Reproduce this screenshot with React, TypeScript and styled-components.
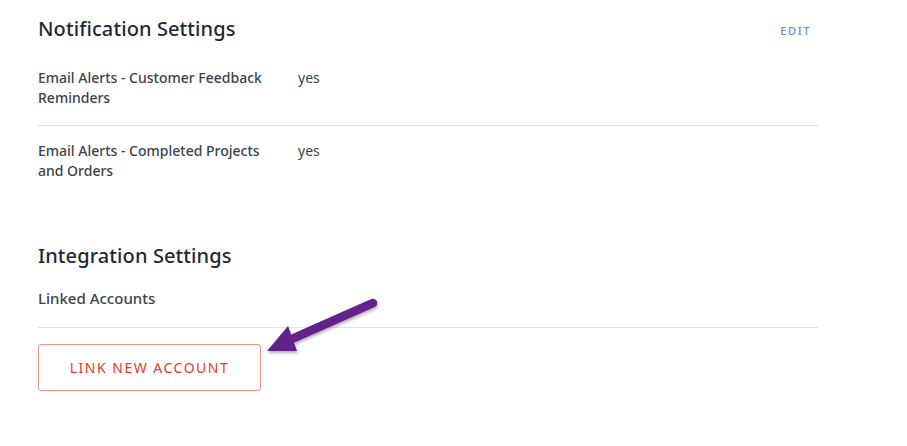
import * as React from "react";
import styled, { createGlobalStyle } from "styled-components";

const GlobalStyle = createGlobalStyle`
    body {
        margin: 0;
        background: #ffffff;
        font-family: "Noto Sans", "Liberation Sans", sans-serif;
    }
`;

const Page = styled.div`
    width: 780px;
    padding: 14px 0 0 38px;
`;

const Section = styled.section`
    display: flex;
    flex-direction: column;
`;

const SectionHeader = styled.div`
    display: flex;
    align-items: center;
    justify-content: space-between;
    height: 28px;
    padding-right: 7px;
`;

const Heading = styled.h2`
    margin: 0;
    font-size: 20px;
    font-weight: 500;
    color: #1f2935;
    letter-spacing: 0.1px;
`;

const EditLink = styled.a`
    font-size: 11px;
    font-weight: 500;
    letter-spacing: 1.6px;
    color: #5a8fdc;
    text-decoration: none;
    cursor: pointer;
    margin-top: 4px;
`;

const Row = styled.div<{ last?: boolean }>`
    display: grid;
    grid-template-columns: 260px 1fr;
    padding: ${(props) => (props.last ? "15px 0 18px" : "26px 0 17px")};
    border-bottom: ${(props) => (props.last ? "none" : "1px solid #e2e2e2")};
`;

const Label = styled.div`
    width: 236px;
    font-size: 14px;
    font-weight: 500;
    line-height: 20px;
    color: #3c4248;
`;

const Value = styled.div`
    font-size: 14px;
    line-height: 20px;
    color: #3c4248;
`;

const Spacer = styled.div<{ size: number }>`
    height: ${(props) => props.size}px;
`;

const SubHeading = styled.div`
    font-size: 15px;
    font-weight: 500;
    color: #3c4248;
    padding: 19px 0 19px;
    border-bottom: 1px solid #e2e2e2;
`;

const ButtonRow = styled.div`
    position: relative;
    padding-top: 16px;
`;

const LinkButton = styled.button`
    width: 223px;
    height: 47px;
    background: #ffffff;
    border: 1px solid #f2938a;
    border-radius: 3px;
    font-family: inherit;
    font-size: 14px;
    letter-spacing: 1.5px;
    color: #e8392f;
    cursor: pointer;
`;

const Arrow = styled.svg`
    position: absolute;
    left: 0;
    top: -40px;
    overflow: visible;
    pointer-events: none;
`;

function PointerArrow(): JSX.Element {
    return (
        <Arrow width="400" height="100" viewBox="0 0 400 100">
            <defs>
                <filter id="shadow" x="-20%" y="-20%" width="140%" height="160%">
                    <feDropShadow dx="1" dy="2" stdDeviation="1.5" floodColor="#000" floodOpacity="0.3" />
                </filter>
            </defs>
            <g filter="url(#shadow)">
                <line x1="335" y1="15" x2="256" y2="50" stroke="#64228a" strokeWidth="8.5" strokeLinecap="round" />
                <polygon points="229,63 250,38 259,63" fill="#64228a" />
            </g>
        </Arrow>
    );
}

export default function App(): JSX.Element {
    return (
        <Page>
            <GlobalStyle />
            <Section>
                <SectionHeader>
                    <Heading>Notification Settings</Heading>
                    <EditLink>EDIT</EditLink>
                </SectionHeader>
                <Row>
                    <Label>Email Alerts - Customer Feedback Reminders</Label>
                    <Value>yes</Value>
                </Row>
                <Row last>
                    <Label>Email Alerts - Completed Projects and Orders</Label>
                    <Value>yes</Value>
                </Row>
            </Section>
            <Spacer size={42} />
            <Section>
                <SectionHeader>
                    <Heading>Integration Settings</Heading>
                </SectionHeader>
                <SubHeading>Linked Accounts</SubHeading>
                <ButtonRow>
                    <LinkButton>LINK NEW ACCOUNT</LinkButton>
                    <PointerArrow />
                </ButtonRow>
            </Section>
        </Page>
    );
}
